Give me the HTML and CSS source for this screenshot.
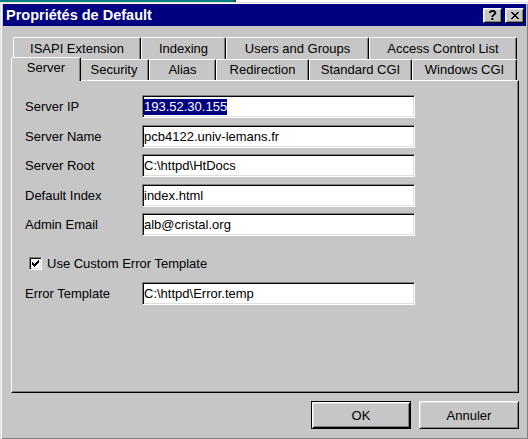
FILE: index.html
```html
<!DOCTYPE html>
<html>
<head>
<meta charset="utf-8">
<title>Propriétés de Default</title>
<link rel="stylesheet" href="styles.css">
</head>
<body>
<div class="desktop-strip"></div>
<div class="window">
  <div class="titlebar">
    <span class="title">Propriétés de Default</span>
    <div class="caption-buttons">
      <div class="cap-btn help">?</div>
      <div class="cap-btn close">
        <svg width="8" height="7" viewBox="0 0 8 7" shape-rendering="crispEdges"><path fill="#000" d="M0 0h2v1h-2z M6 0h2v1h-2z M1 1h2v1h-2z M5 1h2v1h-2z M2 2h4v1h-4z M3 3h2v1h-2z M2 4h4v1h-4z M1 5h2v1h-2z M5 5h2v1h-2z M0 6h2v1h-2z M6 6h2v1h-2z"/></svg>
      </div>
    </div>
  </div>
  <div class="body">
    <div class="tabrow back">
      <div class="tab w-isapi">ISAPI Extension</div>
      <div class="tab w-indexing">Indexing</div>
      <div class="tab w-users">Users and Groups</div>
      <div class="tab w-acl">Access Control List</div>
    </div>
    <div class="tabrow front">
      <div class="tab selected w-server">Server</div>
      <div class="tab w-security">Security</div>
      <div class="tab w-alias">Alias</div>
      <div class="tab w-redirection">Redirection</div>
      <div class="tab w-std">Standard CGI</div>
      <div class="tab w-win">Windows CGI</div>
    </div>
    <div class="panel">
      <div class="fields">
        <span class="label">Server IP</span>
        <div class="field"><span class="sel">193.52.30.155</span></div>
        <span class="label">Server Name</span>
        <div class="field">pcb4122.univ-lemans.fr</div>
        <span class="label">Server Root</span>
        <div class="field">C:\httpd\HtDocs</div>
        <span class="label">Default Index</span>
        <div class="field">index.html</div>
        <span class="label">Admin Email</span>
        <div class="field">alb@cristal.org</div>
      </div>
      <div class="check-row">
        <span class="checkbox">
          <svg width="13" height="13" viewBox="0 0 13 13" shape-rendering="crispEdges"><path fill="#000" d="M9 3h1v1h-1z M8 4h2v1h-2z M3 5h1v1h-1z M7 5h3v1h-3z M3 6h2v1h-2z M6 6h3v1h-3z M3 7h5v1h-5z M4 8h3v1h-3z M5 9h1v1h-1z"/></svg>
        </span>
        <span>Use Custom Error Template</span>
      </div>
      <div class="fields error-row">
        <span class="label">Error Template</span>
        <div class="field">C:\httpd\Error.temp</div>
      </div>
    </div>
    <div class="buttons">
      <div class="btn default">OK</div>
      <div class="btn">Annuler</div>
    </div>
  </div>
</div>
</body>
</html>
```
FILE: styles.css
```css
html, body {
  margin: 0;
  padding: 0;
  overflow: hidden;
  background: #c6c6c6;
}

body {
  width: 528px;
  height: 439px;
  font-family: "Liberation Sans", Arial, sans-serif;
  font-size: 13px;
  color: #000;
}

.desktop-strip {
  height: 2px;
  background: linear-gradient(to right, #008080 0 234px, #3a3a3a 234px 236px, #ffffff 236px);
}

.window {
  box-sizing: border-box;
  width: 529px;
  height: 438px;
  background: #c6c6c6;
  border: 1px solid;
  border-color: #dfdfdf #000 #000 #dfdfdf;
  box-shadow: inset 1px 1px #fff, inset -1px -1px #808080;
  padding: 1px 2px 2px 2px;
}

.titlebar {
  height: 22px;
  background: #000080;
  display: flex;
  align-items: center;
  padding: 0 2px 0 3px;
}

.title {
  color: #fff;
  font-weight: bold;
  font-size: 14.5px;
  white-space: nowrap;
}

.caption-buttons {
  margin-left: auto;
  display: flex;
  gap: 3px;
}

.cap-btn {
  box-sizing: border-box;
  width: 19px;
  height: 15px;
  background: #c6c6c6;
  border: 1px solid;
  border-color: #fff #000 #000 #fff;
  box-shadow: inset 1px 1px #dfdfdf, inset -1px -1px #808080;
  display: flex;
  align-items: center;
  justify-content: center;
}

.cap-btn svg {
  display: block;
}

.help {
  font-weight: bold;
  font-size: 14px;
  line-height: 1;
}

.body {
  padding: 11px 7px 0 8px;
}

.tabrow {
  display: flex;
  margin: 0 2px;
}

.tabrow.back {
  height: 22px;
}

.tabrow.front {
  height: 21px;
  align-items: flex-end;
}

.tab {
  box-sizing: border-box;
  height: 100%;
  flex: none;
  display: flex;
  align-items: center;
  justify-content: center;
  background: #c6c6c6;
  border-top: 1px solid #fff;
  border-left: 1px solid #fff;
  border-right: 1px solid #000;
  box-shadow: inset -1px 0 #808080;
  border-radius: 2px 2px 0 0;
  white-space: nowrap;
  padding-bottom: 1px;
}

.tabrow.front .tab {
  padding-bottom: 2px;
}

.tabrow.front .tab.selected {
  height: 24px;
  margin: 0 -2px -1px -2px;
  padding-bottom: 4px;
  position: relative;
  z-index: 2;
}

.w-isapi { width: 128px; }
.w-indexing { width: 85px; }
.w-users { width: 143px; }
.w-acl { width: 148px; }

.w-server { width: 70px; }
.w-security { width: 70px; }
.w-alias { width: 67px; }
.w-redirection { width: 93px; }
.w-std { width: 103px; }
.w-win { width: 105px; }

.panel {
  box-sizing: border-box;
  height: 313px;
  border: 1px solid;
  border-color: #fff #000 #000 #fff;
  box-shadow: inset -1px -1px #808080;
  padding: 14px 0 0 13px;
}

.fields {
  display: grid;
  grid-template-columns: 117px 273px;
  grid-auto-rows: 23px;
  row-gap: 6.5px;
  align-items: center;
}

.label {
  white-space: nowrap;
}

.field {
  box-sizing: border-box;
  height: 23px;
  background: #fff;
  border: 1px solid;
  border-color: #808080 #fff #fff #808080;
  box-shadow: inset 1px 1px #000, inset -1px -1px #dfdfdf;
  padding: 0 0 0 1px;
  display: flex;
  align-items: center;
  white-space: nowrap;
  overflow: hidden;
}

.sel {
  background: #000080;
  color: #fff;
  line-height: 16px;
}

.check-row {
  display: flex;
  align-items: center;
  height: 13px;
  margin-top: 21px;
  margin-left: 4px;
  gap: 5px;
}

.checkbox {
  box-sizing: border-box;
  width: 13px;
  height: 13px;
  background: #fff;
  border: 1px solid;
  border-color: #808080 #fff #fff #808080;
  box-shadow: inset 1px 1px #000, inset -1px -1px #dfdfdf;
}

.checkbox svg {
  display: block;
  margin: -1px;
}

.error-row {
  margin-top: 12px;
}

.buttons {
  display: flex;
  justify-content: flex-end;
  gap: 8px;
  margin-top: 8px;
}

.btn {
  box-sizing: border-box;
  width: 100px;
  height: 28px;
  display: flex;
  align-items: center;
  justify-content: center;
  border: 1px solid;
  border-color: #fff #000 #000 #fff;
  box-shadow: inset 1px 1px #dfdfdf, inset -1px -1px #808080;
}

.btn.default {
  border-color: #000;
  box-shadow: inset 1px 1px #fff, inset -1px -1px #000, inset 2px 2px #dfdfdf, inset -2px -2px #808080;
}
```
